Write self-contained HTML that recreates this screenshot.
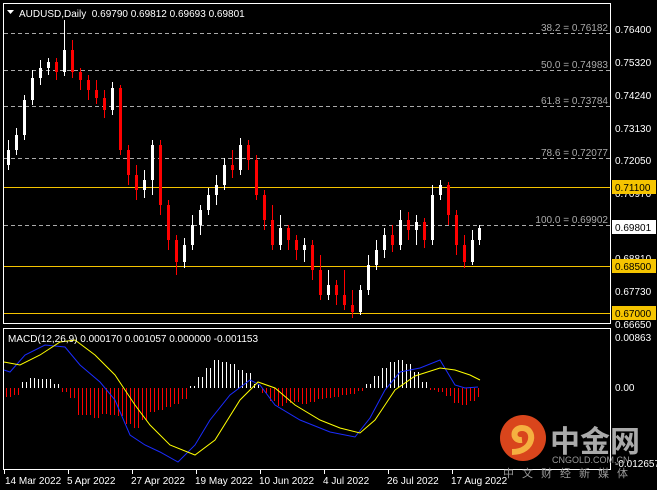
<!DOCTYPE html>
<html><head><meta charset="utf-8"><style>
html,body{margin:0;padding:0;background:#000;width:657px;height:490px;overflow:hidden}
svg{display:block}
</style></head><body>
<svg width="657" height="490" xmlns="http://www.w3.org/2000/svg" font-family="Liberation Sans, sans-serif" font-size="10">
<rect width="657" height="490" fill="#000"/>
<rect x="3.5" y="3.5" width="607" height="320" fill="none" stroke="#fff"/>
<rect x="3.5" y="328.5" width="607" height="141" fill="none" stroke="#fff"/>
<g stroke="#aaa" stroke-dasharray="4,3" stroke-width="1">
<line x1="4" y1="33.5" x2="610" y2="33.5"/>
<line x1="4" y1="70.5" x2="610" y2="70.5"/>
<line x1="4" y1="106.5" x2="610" y2="106.5"/>
<line x1="4" y1="158.5" x2="610" y2="158.5"/>
<line x1="4" y1="225.5" x2="610" y2="225.5"/>
</g>
<g fill="#aaa" text-anchor="end">
<text x="608" y="31">38.2 = 0.76182</text>
<text x="608" y="68">50.0 = 0.74983</text>
<text x="608" y="104">61.8 = 0.73784</text>
<text x="608" y="156">78.6 = 0.72077</text>
<text x="608" y="223">100.0 = 0.69902</text>
</g>
<g stroke="#f5c400"><line x1="4" y1="187.5" x2="610" y2="187.5"/><line x1="4" y1="266.5" x2="610" y2="266.5"/><line x1="4" y1="313.5" x2="610" y2="313.5"/></g>

<!-- candles -->
<path fill="none" stroke="#fff" stroke-width="1" d="M8.5 140V170 M16.5 128V155 M24.5 95V140 M32.5 70V105 M40.5 60V85 M48.5 58V75 M64.5 20V76 M112.5 82V115 M144.5 170V198 M152.5 140V195 M184.5 238V268 M192.5 215V250 M200.5 205V235 M208.5 188V215 M216.5 175V205 M224.5 158V190 M240.5 138V175 M280.5 215V250 M304.5 238V262 M328.5 270V300 M360.5 285V315 M368.5 255V295 M376.5 240V270 M384.5 228V258 M400.5 210V250 M416.5 215V245 M432.5 185V245 M440.5 180V200 M472.5 230V265 M479.5 225V245"/>
<path fill="none" stroke="#fff" stroke-width="3" d="M8.5 150V165 M16.5 135V150 M24.5 100V135 M32.5 78V100 M40.5 68V78 M48.5 62V68 M64.5 50V72 M112.5 88V110 M144.5 180V190 M152.5 145V180 M184.5 245V262 M192.5 225V245 M200.5 210V225 M208.5 195V210 M216.5 185V195 M224.5 165V185 M240.5 145V170 M280.5 228V245 M304.5 245V250 M328.5 285V295 M360.5 290V312 M368.5 265V290 M376.5 250V265 M384.5 235V250 M400.5 220V245 M416.5 222V230 M432.5 195V240 M440.5 185V195 M472.5 240V262 M479.5 228V240"/>
<path fill="none" stroke="#f00" stroke-width="1" d="M56.5 58V80 M72.5 40V78 M80.5 68V90 M88.5 75V100 M96.5 80V104 M104.5 90V118 M120.5 85V155 M128.5 145V185 M136.5 165V200 M160.5 140V215 M168.5 200V250 M176.5 235V275 M232.5 150V178 M248.5 140V170 M256.5 155V200 M264.5 190V230 M272.5 205V250 M288.5 225V250 M296.5 235V260 M312.5 240V280 M320.5 255V300 M336.5 280V305 M344.5 270V310 M352.5 290V318 M392.5 225V252 M408.5 212V240 M424.5 218V248 M448.5 182V225 M456.5 210V255 M464.5 235V268"/>
<path fill="none" stroke="#f00" stroke-width="3" d="M56.5 62V72 M72.5 50V72 M80.5 72V80 M88.5 80V90 M96.5 90V98 M104.5 98V110 M120.5 88V150 M128.5 150V175 M136.5 175V190 M160.5 145V205 M168.5 205V240 M176.5 240V262 M232.5 165V170 M248.5 145V160 M256.5 160V195 M264.5 195V220 M272.5 220V245 M288.5 228V240 M296.5 240V250 M312.5 245V270 M320.5 270V295 M336.5 285V295 M344.5 295V305 M352.5 305V312 M392.5 235V245 M408.5 220V230 M424.5 222V240 M448.5 185V215 M456.5 215V245 M464.5 245V262"/>

<!-- MACD histogram -->
<path fill="none" stroke="#fff" d="M22.5 388V382 M26.5 388V382 M30.5 388V378 M34.5 388V378 M38.5 388V379 M42.5 388V379 M46.5 388V379 M50.5 388V379 M54.5 388V384 M58.5 388V384 M190.5 388V386 M194.5 388V386 M198.5 388V377 M202.5 388V377 M206.5 388V368 M210.5 388V368 M214.5 388V360 M218.5 388V360 M222.5 388V362 M226.5 388V362 M230.5 388V364 M234.5 388V364 M238.5 388V370 M242.5 388V370 M246.5 388V373 M250.5 388V373 M254.5 388V384 M258.5 388V384 M366.5 388V384 M370.5 388V384 M374.5 388V376 M378.5 388V376 M382.5 388V368 M386.5 388V368 M390.5 388V362 M394.5 388V362 M398.5 388V360 M402.5 388V360 M406.5 388V364 M410.5 388V364 M414.5 388V372 M418.5 388V372 M422.5 388V382 M426.5 388V382"/>
<path fill="none" stroke="#f00" d="M6.5 388V397 M10.5 388V397 M14.5 388V395 M18.5 388V395 M62.5 388V392 M66.5 388V392 M70.5 388V398 M74.5 388V398 M78.5 388V415 M82.5 388V415 M86.5 388V415 M90.5 388V415 M94.5 388V418 M98.5 388V418 M102.5 388V414 M106.5 388V414 M110.5 388V415 M114.5 388V415 M118.5 388V416 M122.5 388V416 M126.5 388V424 M130.5 388V424 M134.5 388V428 M138.5 388V428 M142.5 388V420 M146.5 388V420 M150.5 388V412 M154.5 388V412 M158.5 388V410 M162.5 388V410 M166.5 388V407 M170.5 388V407 M174.5 388V404 M178.5 388V404 M182.5 388V399 M186.5 388V399 M262.5 388V393 M266.5 388V393 M270.5 388V401 M274.5 388V401 M278.5 388V406 M282.5 388V406 M286.5 388V403 M290.5 388V403 M294.5 388V402 M298.5 388V402 M302.5 388V404 M306.5 388V404 M310.5 388V402 M314.5 388V402 M318.5 388V399 M322.5 388V399 M326.5 388V398 M330.5 388V398 M334.5 388V397 M338.5 388V397 M342.5 388V395 M346.5 388V395 M350.5 388V394 M354.5 388V394 M358.5 388V391 M362.5 388V391 M430.5 388V390 M434.5 388V390 M438.5 388V392 M442.5 388V392 M446.5 388V396 M450.5 388V396 M454.5 388V403 M458.5 388V403 M462.5 388V405 M466.5 388V405 M470.5 388V401 M474.5 388V401 M478.5 388V397"/>
<polyline fill="none" stroke="#1a2cff" points="4,370 10,372 25,355 45,345 65,347 80,365 100,382 115,400 130,435 145,445 160,452 178,462 195,445 210,420 230,395 250,380 260,385 275,405 300,420 330,432 355,437 370,418 385,390 400,372 420,368 440,360 455,385 465,388 478,387"/>
<polyline fill="none" stroke="#ffff00" points="4,362 20,365 40,355 60,342 75,340 95,355 115,375 135,405 150,425 170,445 195,455 215,440 240,400 258,382 275,388 295,405 320,420 340,428 360,433 375,420 395,390 415,376 440,368 455,370 470,375 480,380"/>

<text x="19" y="17" fill="#fff">AUDUSD,Daily&#160; 0.69790 0.69812 0.69693 0.69801</text>
<polygon points="7,10 14,10 10.5,14" fill="#fff"/>
<text x="8" y="342" fill="#fff">MACD(12,26,9) 0.000170 0.001057 0.000000 -0.001153</text>
<g fill="#fff">
<text x="615" y="33">0.76400</text><text x="615" y="66">0.75320</text><text x="615" y="99">0.74240</text>
<text x="615" y="132">0.73130</text><text x="615" y="164">0.72050</text><text x="615" y="197">0.70970</text>
<text x="615" y="262">0.68810</text><text x="615" y="295">0.67730</text><text x="615" y="328">0.66650</text>
<text x="615" y="341">0.00863</text><text x="615" y="391">0.00</text><text x="615" y="467">-0.012657</text>
</g>
<rect x="612" y="180" width="44" height="14" fill="#f5c400"/><text x="615" y="191" fill="#000">0.71100</text>
<rect x="612" y="220" width="44" height="14" fill="#fff"/><text x="615" y="231" fill="#000">0.69801</text>
<rect x="612" y="259" width="44" height="14" fill="#f5c400"/><text x="615" y="270" fill="#000">0.68500</text>
<rect x="612" y="306" width="44" height="14" fill="#f5c400"/><text x="615" y="317" fill="#000">0.67000</text>
<g fill="#fff"><text x="5" y="484">14 Mar 2022</text><text x="67" y="484">5 Apr 2022</text><text x="131" y="484">27 Apr 2022</text><text x="195" y="484">19 May 2022</text><text x="259" y="484">10 Jun 2022</text><text x="323" y="484">4 Jul 2022</text><text x="387" y="484">26 Jul 2022</text><text x="451" y="484">17 Aug 2022</text></g>
<g stroke="#fff"><line x1="4.5" y1="470" x2="4.5" y2="474"/><line x1="68.5" y1="470" x2="68.5" y2="474"/><line x1="132.5" y1="470" x2="132.5" y2="474"/><line x1="196.5" y1="470" x2="196.5" y2="474"/><line x1="260.5" y1="470" x2="260.5" y2="474"/><line x1="324.5" y1="470" x2="324.5" y2="474"/><line x1="388.5" y1="470" x2="388.5" y2="474"/><line x1="452.5" y1="470" x2="452.5" y2="474"/></g>
<circle cx="523" cy="438" r="23" fill="#d9451c"/>
<path d="M512 452 C535 452 536 428 522 428 C512 428 512 441 522 440" stroke="#f5b040" stroke-width="6" fill="none"/>
<text x="550" y="452" fill="#aaa" font-size="30" font-weight="bold" font-family="Noto Sans CJK SC, sans-serif">中金网</text>
<text x="552" y="463" fill="#999" font-size="9">CNGOLD.COM.CN</text>
<text x="503" y="477" fill="#999" font-size="11" font-family="Noto Sans CJK SC, sans-serif" letter-spacing="8">中文财经新媒体</text>
</svg>
</body></html>
